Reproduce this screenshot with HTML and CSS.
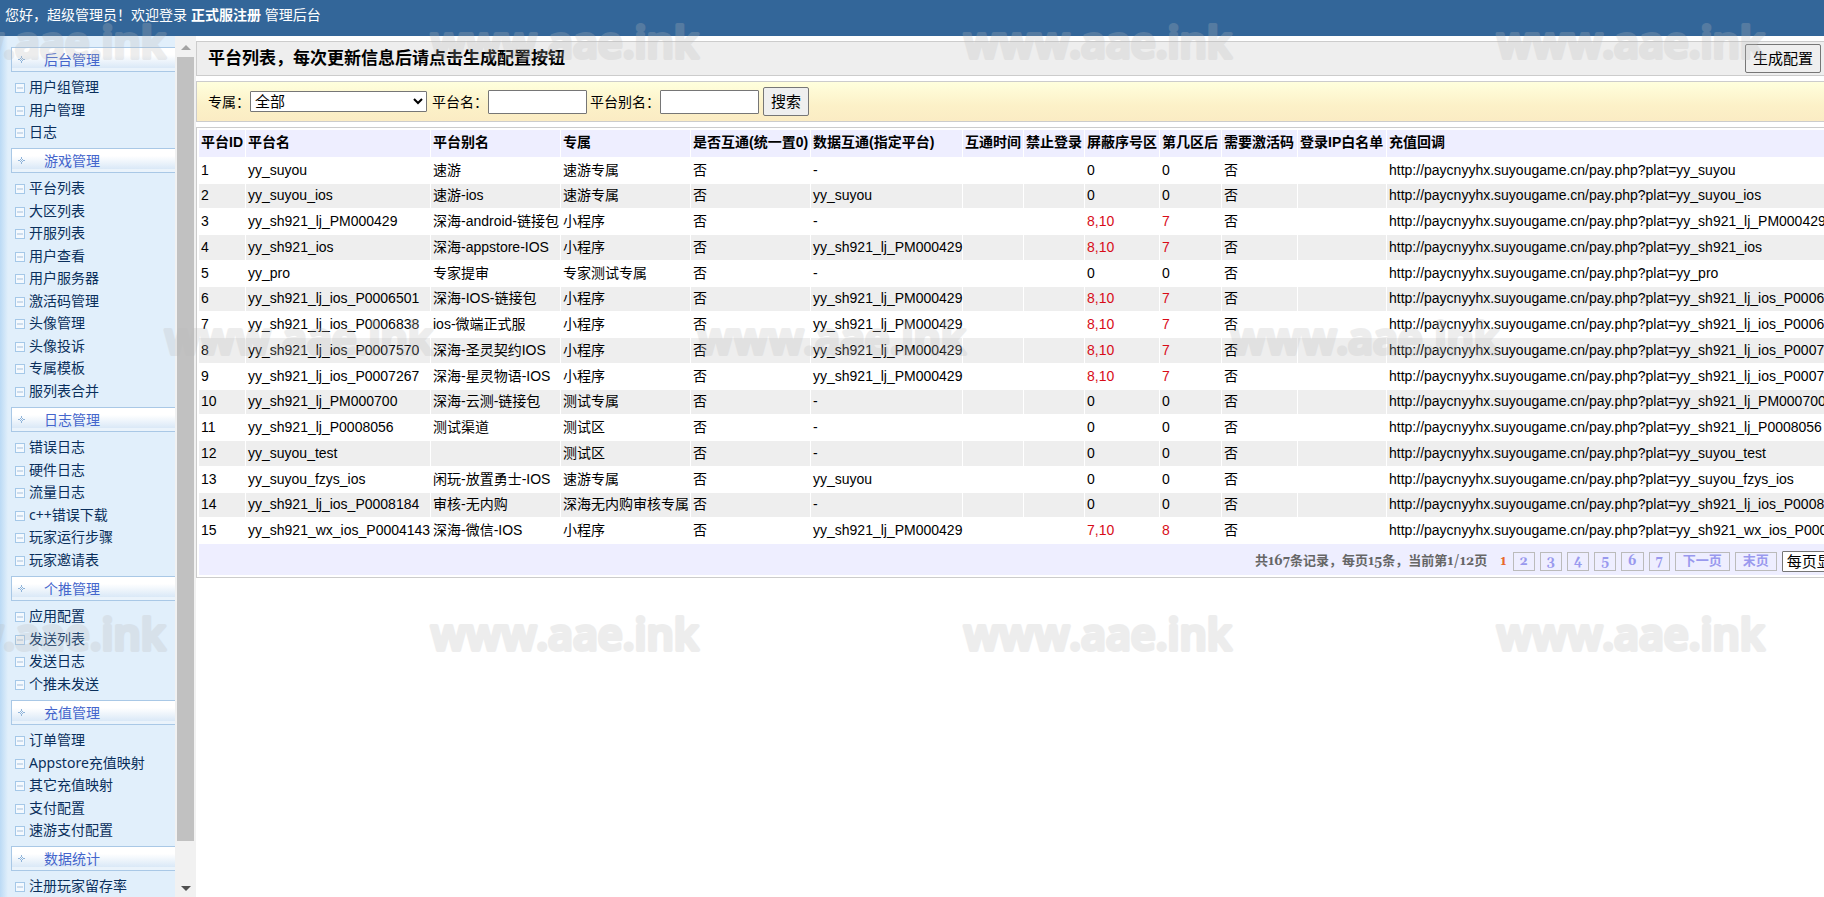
FILE: index.html
```html
<!DOCTYPE html>
<html lang="zh-CN">
<head>
<meta charset="utf-8">
<title>管理后台</title>
<link rel="stylesheet" href="styles.css">
</head>
<body>
<header class="topbar">您好，超级管理员！欢迎登录 <b>正式服注册</b> 管理后台</header>
<div class="frame">
  <nav class="sidebar" id="sidebar"></nav>
  <div class="scroll" aria-hidden="true"><svg width="18" height="21" viewBox="0 0 18 21"><path d="M9 9l5 5H4z" fill="#a3a3a3"/></svg><div class="thumb"></div><svg width="18" height="19" viewBox="0 0 18 19"><path d="M4 8h10l-5 5z" fill="#505050"/></svg></div>
  <main class="main">
    <div class="titlebar"><h1>平台列表，每次更新信息后请点击生成配置按钮</h1><button class="btn" type="button">生成配置</button></div>
    <form class="filter">
      <label for="owner">专属：</label><select id="owner" class="owner"><option>全部</option></select>
      <label for="pname">平台名：</label><input id="pname" type="text">
      <label for="alias">平台别名：</label><input id="alias" type="text">
      <button class="btn" type="button">搜索</button>
    </form>
    <div class="tablebox">
      <table class="list">
        <colgroup><col class="c1"><col class="c2"><col class="c3"><col class="c4"><col class="c5"><col class="c6"><col class="c7"><col class="c8"><col class="c9"><col class="c10"><col class="c11"><col class="c12"><col class="c13"></colgroup>
        <thead><tr><th>平台ID</th><th>平台名</th><th>平台别名</th><th>专属</th><th>是否互通(统一置0)</th><th>数据互通(指定平台)</th><th>互通时间</th><th>禁止登录</th><th>屏蔽序号区</th><th>第几区后</th><th>需要激活码</th><th>登录IP白名单</th><th>充值回调</th></tr></thead>
        <tbody id="rows"></tbody>
      </table>
      <div class="pager">
        <span class="info">共167条记录，每页15条，当前第1/12页</span><strong>1</strong>
        <a href="#">2</a><a href="#">3</a><a href="#">4</a><a href="#">5</a><a href="#">6</a><a href="#">7</a><a class="word" href="#">下一页</a><a class="word" href="#">末页</a>
        <select aria-label="每页显示"><option>每页显示15条</option></select>
      </div>
    </div>
  </main>
</div>
<div class="marks" id="marks" aria-hidden="true"></div>
<script src="app.js"></script>
</body>
</html>
```
FILE: styles.css
```css
* { box-sizing: border-box; }
body {
  margin: 0;
  height: 100vh;
  display: flex;
  flex-direction: column;
  overflow: hidden;
  position: relative;
  background: #fff;
  color: #000;
  font: 14px/20px "Liberation Sans", "Noto Sans CJK SC", sans-serif;
}
.topbar {
  flex: none;
  height: 36px;
  padding: 5px;
  background: #336699;
  color: #fff;
}
.frame { flex: 1; min-height: 0; display: flex; }

.sidebar {
  flex: none;
  width: 175px;
  overflow: hidden;
  padding: 11px 0 0 11px;
  background: linear-gradient(90deg, #bbdaf5, #e1effb 8px);
  font-family: "Noto Sans", "Noto Sans CJK SC", sans-serif;
}
.sidebar h2 {
  display: flex;
  align-items: center;
  gap: 18px;
  height: 25px;
  margin: 0;
  padding-left: 6px;
  border: 1px solid #a9c8e6;
  border-right: 0;
  background: linear-gradient(#fff 30%, #dbe9f7 85%, #eaf3fb 86%);
  color: #4465cc;
  font-size: 14px;
  font-weight: 400;
}
.sidebar ul { list-style: none; margin: 0; padding: 5px 0 4px 4px; }
.sidebar li { display: flex; align-items: center; gap: 4px; height: 22px; }
.sidebar li:nth-child(even) { height: 23px; }
.sidebar a { padding-bottom: 2px; color: #0a2f5c; text-decoration: none; white-space: nowrap; }

.scroll {
  flex: none;
  width: 21px;
  padding: 0 2px;
  display: flex;
  flex-direction: column;
  background: #f1f1f1;
}
.scroll svg { flex: none; }
.thumb { height: 91%; width: 17px; margin-bottom: auto; background: #c1c1c1; }

.main {
  flex: 1;
  min-width: 0;
  padding-top: 5px;
  display: flex;
  flex-direction: column;
  gap: 5px;
  overflow: hidden;
}
.titlebar {
  display: flex;
  align-items: center;
  justify-content: space-between;
  height: 35px;
  padding: 0 3px 0 11px;
  border: 1px solid #ccc;
  border-right: 0;
  background: #eee;
}
.titlebar h1 { margin: 0; font-size: 17px; font-weight: 700; }
.btn {
  height: 29px;
  padding: 0 7px 2px;
  border: 1px solid #767676;
  border-radius: 2px;
  background: #efefef;
  color: #000;
  font: 15px "Liberation Sans", "Noto Sans CJK SC", sans-serif;
}
.filter {
  display: flex;
  align-items: center;
  height: 41px;
  padding-left: 11px;
  border: 1px solid #ccc;
  border-right: 0;
  background: linear-gradient(#ffffdd, #fcf1c8 60%, #fbecc4);
}
.filter select, .pager select {
  width: 177px;
  height: 21px;
  padding: 0;
  border: 1px solid #767676;
  border-radius: 1px;
  background: #fff;
  color: #000;
  font: 15px "Liberation Sans", "Noto Sans CJK SC", sans-serif;
}
.filter select { margin-right: 5px; }
.filter input {
  width: 99px;
  height: 24px;
  margin-right: 3px;
  border: 1px solid #767676;
  border-radius: 1px;
  background: #fff;
}
.filter .btn { margin-left: 1px; }

.tablebox {
  border: 1px solid #ccc;
  border-right: 0;
  padding: 1px 0 2px 1px;
}
.list {
  width: 1900px;
  table-layout: fixed;
  border-collapse: separate;
  border-spacing: 1px;
}
.c1 { width: 46px; }
.c2 { width: 184px; }
.c3 { width: 129px; }
.c4 { width: 129px; }
.c5 { width: 119px; }
.c6 { width: 151px; }
.c7 { width: 60px; }
.c8 { width: 60px; }
.c9 { width: 74px; }
.c10 { width: 61px; }
.c11 { width: 75px; }
.c12 { width: 88px; }
.list th, .list td {
  height: 25px;
  padding: 0 0 2px 2px;
  line-height: 20px;
  text-align: left;
  white-space: nowrap;
}
.list th { height: 27px; padding-bottom: 4px; background: #eeeeff; }
.list tbody tr:nth-child(even) td { background: #eee; }
.list tbody tr:nth-child(4n+2) td { height: 24px; }
.list .hot { color: #d80c18; }

.pager {
  display: flex;
  align-items: center;
  gap: 5px;
  height: 31px;
  margin-left: 1px;
  padding: 3px 0 0 1056px;
  background: #eeeeff;
  color: #666;
  font: bold 13px/17px Gelasio, Georgia, "Liberation Serif", "Noto Sans CJK SC", serif;
  white-space: nowrap;
  overflow: hidden;
}
.pager > * { flex: none; }
.pager .info { margin-right: 8px; }
.pager strong { margin-right: 1px; color: #e8692c; }
.pager a {
  height: 19px;
  padding: 0 6px;
  border: 1px solid #bbb;
  color: #9999ee;
  text-decoration: none;
}
.pager .word { padding: 0 7px; }

.marks {
  position: absolute;
  inset: 0;
  overflow: hidden;
  pointer-events: none;
  padding-top: 14px;
  display: flex;
  flex-direction: column;
  gap: 236px;
}
.markrow {
  display: flex;
  gap: 253px;
  margin-left: -104px;
  opacity: 0.25;
}
.markrow.shifted { margin-left: 163px; }
.markrow svg { flex: none; width: 280px; height: 60px; }
.markrow text {
  fill: #bbb;
  stroke: #bbb;
  stroke-width: 4px;
  stroke-linejoin: round;
  font: 600 43px "Open Sans", sans-serif;
}
```
FILE: app.js
```javascript
const menu = [
  ["后台管理", ["用户组管理", "用户管理", "日志"]],
  ["游戏管理", ["平台列表", "大区列表", "开服列表", "用户查看", "用户服务器", "激活码管理", "头像管理", "头像投诉", "专属模板", "服列表合并"]],
  ["日志管理", ["错误日志", "硬件日志", "流量日志", "c++错误下载", "玩家运行步骤", "玩家邀请表"]],
  ["个推管理", ["应用配置", "发送列表", "发送日志", "个推未发送"]],
  ["充值管理", ["订单管理", "Appstore充值映射", "其它充值映射", "支付配置", "速游支付配置"]],
  ["数据统计", ["注册玩家留存率"]]
];
const cross = '<svg width="8" height="8" viewBox="0 0 8 8" fill="#8fb4da"><path d="M3 0h1v2H3zM3 5h1v2H3zM0 3h2v1H0zM5 3h2v1H5zM3 3h1v1H3zM2 2h1v1H2zM4 2h1v1H4zM2 4h1v1H2zM4 4h1v1H4z"/></svg>';
const box = '<svg width="10" height="10" viewBox="0 0 10 10"><rect x=".5" y=".5" width="9" height="9" fill="#f4f9fe" stroke="#a5c8e8"/><path d="M2 5h6" stroke="#a5c0dc" stroke-width="1"/></svg>';
document.getElementById("sidebar").innerHTML = menu.map(([head, items]) =>
  `<section><h2>${cross}${head}</h2><ul>${items.map(t => `<li>${box}<a href="#">${t}</a></li>`).join("")}</ul></section>`).join("");

const PM = "yy_sh921_lj_PM000429";
const rows = [
  ["yy_suyou", "速游", "速游专属", "-", "0", "0"],
  ["yy_suyou_ios", "速游-ios", "速游专属", "yy_suyou", "0", "0"],
  ["yy_sh921_lj_PM000429", "深海-android-链接包", "小程序", "-", "8,10", "7"],
  ["yy_sh921_ios", "深海-appstore-IOS", "小程序", PM, "8,10", "7"],
  ["yy_pro", "专家提审", "专家测试专属", "-", "0", "0"],
  ["yy_sh921_lj_ios_P0006501", "深海-IOS-链接包", "小程序", PM, "8,10", "7"],
  ["yy_sh921_lj_ios_P0006838", "ios-微端正式服", "小程序", PM, "8,10", "7"],
  ["yy_sh921_lj_ios_P0007570", "深海-圣灵契约IOS", "小程序", PM, "8,10", "7"],
  ["yy_sh921_lj_ios_P0007267", "深海-星灵物语-IOS", "小程序", PM, "8,10", "7"],
  ["yy_sh921_lj_PM000700", "深海-云测-链接包", "测试专属", "-", "0", "0"],
  ["yy_sh921_lj_P0008056", "测试渠道", "测试区", "-", "0", "0"],
  ["yy_suyou_test", "", "测试区", "-", "0", "0"],
  ["yy_suyou_fzys_ios", "闲玩-放置勇士-IOS", "速游专属", "yy_suyou", "0", "0"],
  ["yy_sh921_lj_ios_P0008184", "审核-无内购", "深海无内购审核专属", "-", "0", "0"],
  ["yy_sh921_wx_ios_P0004143", "深海-微信-IOS", "小程序", PM, "7,10", "8"]
];
const num = v => v === "0" ? "<td>0</td>" : `<td class="hot">${v}</td>`;
document.getElementById("rows").innerHTML = rows.map(([name, alias, owner, link, zone, after], i) =>
  `<tr><td>${i + 1}</td><td>${name}</td><td>${alias}</td><td>${owner}</td><td>否</td><td>${link}</td><td></td><td></td>${num(zone)}${num(after)}<td>否</td><td></td><td>http://paycnyyhx.suyougame.cn/pay.php?plat=${name}</td></tr>`).join("");

const mark = '<svg viewBox="0 0 280 60"><text x="2" y="44">www.aae.ink</text></svg>';
document.getElementById("marks").innerHTML = [["", 4], [" shifted", 3], ["", 4]].map(([cls, n]) =>
  `<div class="markrow${cls}">${mark.repeat(n)}</div>`).join("");
```
